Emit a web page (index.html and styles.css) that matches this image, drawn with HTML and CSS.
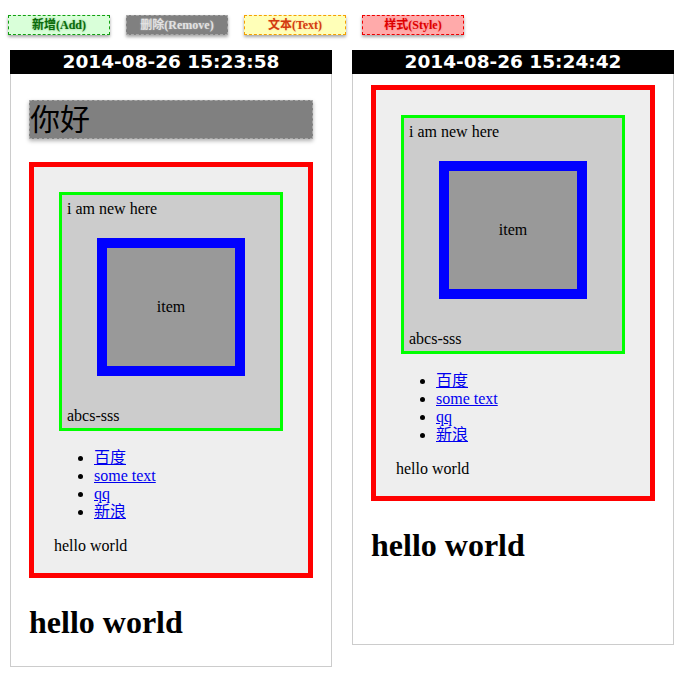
FILE: index.html
```html
<!DOCTYPE html>
<html>
<head>
<meta charset="utf-8">
<link rel="stylesheet" href="styles.css">
</head>
<body>
<div class="toolbar">
  <div class="btn btn-add">新增(Add)</div>
  <div class="btn btn-remove">删除(Remove)</div>
  <div class="btn btn-text">文本(Text)</div>
  <div class="btn btn-style">样式(Style)</div>
</div>
<div class="panels">
  <div class="panel">
    <div class="panel-head">2014-08-26 15:23:58</div>
    <div class="panel-body panel-body-1">
      <div class="hello-box">你好</div>
      <div class="red red-1">
        <div class="green">
          <p class="line">i am new here</p>
          <div class="blue"><span>item</span></div>
          <p class="line line-bottom">abcs-sss</p>
        </div>
        <ul class="links">
          <li><a href="#">百度</a></li>
          <li><a href="#">some text</a></li>
          <li><a href="#">qq</a></li>
          <li><a href="#">新浪</a></li>
        </ul>
        <p class="hello">hello world</p>
      </div>
      <h1 class="big">hello world</h1>
    </div>
  </div>
  <div class="panel">
    <div class="panel-head">2014-08-26 15:24:42</div>
    <div class="panel-body panel-body-2">
      <div class="red red-2">
        <div class="green">
          <p class="line">i am new here</p>
          <div class="blue"><span>item</span></div>
          <p class="line line-bottom">abcs-sss</p>
        </div>
        <ul class="links">
          <li><a href="#">百度</a></li>
          <li><a href="#">some text</a></li>
          <li><a href="#">qq</a></li>
          <li><a href="#">新浪</a></li>
        </ul>
        <p class="hello">hello world</p>
      </div>
      <h1 class="big">hello world</h1>
    </div>
  </div>
</div>
</body>
</html>
```
FILE: styles.css
```css
html, body {
  margin: 0;
  padding: 0;
  background: #fff;
}
body {
  font-family: "Liberation Serif", "Noto Sans CJK SC", serif;
  font-size: 16px;
  line-height: 18px;
  color: #000;
}
.toolbar {
  display: flex;
  gap: 16px;
  padding: 15px 0 0 8px;
  height: 20px;
}
.btn {
  box-sizing: border-box;
  width: 102px;
  height: 20px;
  border: 1px dashed;
  font-weight: bold;
  font-size: 12px;
  line-height: 18px;
  text-align: center;
  box-shadow: 0 2px 3px rgba(0, 0, 0, 0.35);
}
.btn-add {
  background: #d9ffd9;
  border-color: #11a011;
  color: #0a6a0a;
  text-shadow: 0 0 2px rgba(0, 120, 0, 0.5);
}
.btn-remove {
  background: #808080;
  border-color: #a8a8a8;
  color: #e2e2e2;
  text-shadow: 0 0 2px rgba(255, 255, 255, 0.4);
}
.btn-text {
  background: #ffffb8;
  border-color: #f5a000;
  color: #d23a10;
  text-shadow: 0 0 2px rgba(255, 120, 0, 0.35);
}
.btn-style {
  background: #ffaaaa;
  border-color: #ee0000;
  color: #dd0000;
  text-shadow: 0 0 2px rgba(255, 0, 0, 0.3);
}
.panels {
  display: flex;
  align-items: flex-start;
  gap: 20px;
  padding: 15px 0 0 10px;
}
.panel {
  width: 322px;
  display: flex;
  flex-direction: column;
}
.panel-head {
  height: 24px;
  background: #000;
  color: #fff;
  font-family: "DejaVu Sans", Verdana, sans-serif;
  font-weight: bold;
  font-size: 18.5px;
  line-height: 24px;
  text-align: center;
}
.panel-body {
  border: 1px solid #cccccc;
  border-top: none;
  padding: 0 18px;
  overflow: hidden;
}
.panel-body-1 {
  height: 592px;
}
.panel-body-2 {
  height: 570px;
}
.hello-box {
  margin-top: 26px;
  background: #808080;
  border: 1px dashed #a9a9a9;
  box-shadow: 0 2px 4px rgba(0, 0, 0, 0.3);
  font-size: 30px;
  line-height: 37px;
  height: 37px;
}
.red {
  box-sizing: border-box;
  height: 416px;
  border: 5px solid #ff0000;
  background: #eeeeee;
  padding: 20px;
}
.red-1 {
  margin-top: 23px;
}
.red-2 {
  margin-top: 11px;
}
.green {
  box-sizing: border-box;
  height: 239px;
  margin: 5px;
  border: 3px solid #00ff00;
  background: #cccccc;
  padding: 5px 5px 3px;
  display: flex;
  flex-direction: column;
}
.line {
  margin: 0;
}
.line-bottom {
  margin-top: auto;
}
.blue {
  box-sizing: border-box;
  width: 148px;
  height: 138px;
  margin: 20px auto 0;
  border: 10px solid #0000ff;
  background: #999999;
  display: flex;
  align-items: center;
  justify-content: center;
}
.links {
  margin: 18px 0 16px;
  padding-left: 40px;
}
.links a {
  color: #0000ee;
}
.hello {
  margin: 16px 0;
}
.big {
  margin: 26px 0 0 0;
  font-size: 32px;
  line-height: 37px;
  font-weight: bold;
}
```
